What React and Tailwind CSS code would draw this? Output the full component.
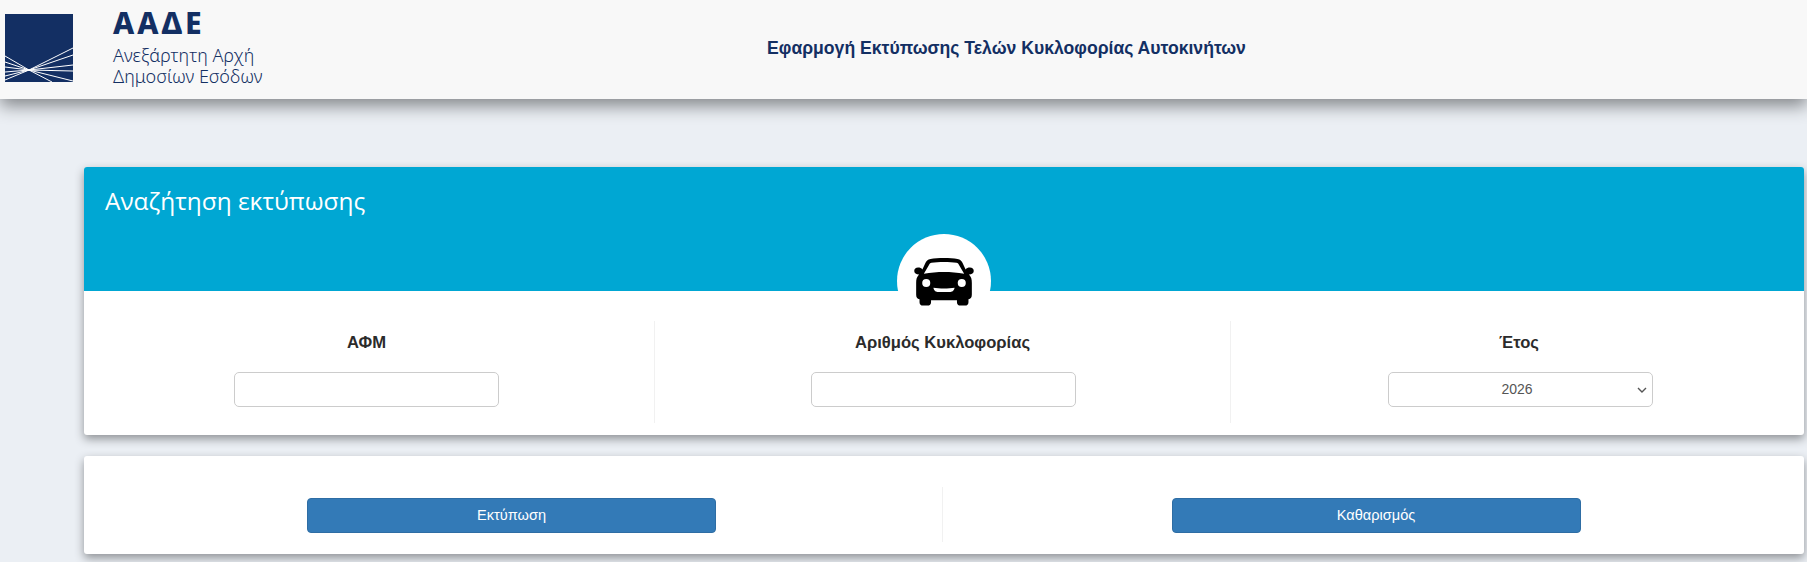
const years = [2026, 2025, 2024, 2023, 2022];

function Logo() {
    return (
        <svg width="68" height="68" viewBox="0 0 68 68" className="shrink-0 -mt-[3px]">
            <rect width="68" height="68" fill="#132f63" />
            <g stroke="#ffffff" fill="none">
                <path d="M0 42 L24 56 L68 34" strokeWidth="1" />
                <path d="M0 48 L24 56 L68 41" strokeWidth="1" />
                <path d="M0 53 L24 56 L68 51" strokeWidth="1.2" />
                <path d="M0 58 L24 56 L68 57" strokeWidth="1.2" />
                <path d="M0 62 L24 56 L68 67" strokeWidth="1" />
                <path d="M0 66 L24 56 L47 68" strokeWidth="1" />
            </g>
        </svg>
    );
}

function CarIcon() {
    return (
        <svg width="62" height="48" viewBox="0 0 62 50">
            <path
                fill="#000000"
                d="M17 1 C24 -0.3 38 -0.3 45 1 C48 1.6 49.5 3 50.5 5.5 L53.5 12 C54.5 10.5 56 10 58 10 C60.5 10 62 11.5 62 13.5 C62 16 60 17 57 17.2 C59.5 20 60 22 60 26 L60 38 C60 41 59 42.5 56.5 43 L56.5 46 C56.5 48.5 55 49.5 53 49.5 L48 49.5 C46 49.5 44.5 48.5 44.5 46 L44.5 44 L17.5 44 L17.5 46 C17.5 48.5 16 49.5 14 49.5 L9 49.5 C7 49.5 5.5 48.5 5.5 46 L5.5 43 C3 42.5 2 41 2 38 L2 26 C2 22 2.5 20 5 17.2 C2 17 0 16 0 13.5 C0 11.5 1.5 10 4 10 C6 10 7.5 10.5 8.5 12 L11.5 5.5 C12.5 3 14 1.6 17 1 Z"
            />
            <path fill="#ffffff" d="M18 5 C25 3.8 37 3.8 44 5 C45.5 5.3 46 6 46.5 7 L52 16.5 C38 14 24 14 10 16.5 L15.5 7 C16 6 16.5 5.3 18 5 Z" />
            <circle cx="12.5" cy="26" r="4.2" fill="#ffffff" />
            <circle cx="49.5" cy="26" r="4.2" fill="#ffffff" />
            <path fill="#ffffff" d="M20 31 C26 32 36 32 42 31 C41.5 34.5 39 35.5 37 35.5 L25 35.5 C23 35.5 20.5 34.5 20 31 Z" />
        </svg>
    );
}

function Field({ label, children, divider }) {
    return (
        <div className={`h-[102px] flex flex-col items-center ${divider ? "border-r border-[#f1f1f1]" : ""}`}>
            <label className="h-[20px] mt-[12px] text-[16.6px] leading-[20px] font-bold text-[#2b2b2b]">{label}</label>
            <div className="relative mt-[19px]">{children}</div>
        </div>
    );
}

export default function App() {
    const boxClass =
        "block w-[265px] h-[35px] bg-white border border-[#cccccc] rounded-[5px] text-[14px] text-[#555555] outline-none";

    return (
        <div className="h-[562px] overflow-hidden bg-[#ebeff4] font-['Liberation_Sans',Arial,sans-serif]">
            <header className="relative z-10 h-[99px] bg-[#f8f8f8] shadow-[0_7px_16px_#85888c] flex items-center">
                <div className="w-[283px] flex items-center pl-[5px] shrink-0">
                    <Logo />
                    <div className="ml-[40px] text-[#132f63] font-['Noto_Sans',sans-serif]">
                        <div className="text-[30px] leading-[32px] font-extrabold tracking-[3px] -mt-[6px]">ΑΑΔΕ</div>
                        <div className="mt-[6px] text-[18px] leading-[21px] font-light whitespace-nowrap">
                            Ανεξάρτητη Αρχή
                            <br />
                            Δημοσίων Εσόδων
                        </div>
                    </div>
                </div>
                <h1 className="w-[1447px] -mt-[3px] text-center text-[17.6px] font-bold text-[#132f63]">
                    Εφαρμογή Εκτύπωσης Τελών Κυκλοφορίας Αυτοκινήτων
                </h1>
            </header>

            <main className="pl-[84px] pr-[3px] pt-[68px]">
                <section className="bg-white rounded-[3px] shadow-[0_4px_10px_#8f9296]">
                    <div className="relative h-[124px] bg-[#00a7d3] rounded-t-[3px] px-[21px] pt-[18px]">
                        <h2 className="text-[24.4px] leading-[32px] text-white font-['Open_Sans',sans-serif]">
                            Αναζήτηση εκτύπωσης
                        </h2>
                        <div className="absolute left-[813px] top-[67px] w-[94px] h-[94px] rounded-full bg-white flex items-start justify-center pt-[24px]">
                            <CarIcon />
                        </div>
                    </div>
                    <div className="-ml-[5px] -mr-[3px] grid grid-cols-3 pt-[30px] h-[144px]">
                        <Field label="ΑΦΜ" divider>
                            <input className={`${boxClass} px-3`} />
                        </Field>
                        <Field label="Αριθμός Κυκλοφορίας" divider>
                            <input className={`${boxClass} px-3 translate-x-[1px]`} />
                        </Field>
                        <Field label="Έτος">
                            <select
                                className={`${boxClass} appearance-none text-center pl-3 pr-[18px] translate-x-[1px]`}
                                defaultValue={2026}
                            >
                                {years.map((y) => (
                                    <option key={y} value={y}>
                                        {y}
                                    </option>
                                ))}
                            </select>
                            <svg
                                width="10"
                                height="6"
                                viewBox="0 0 10 6"
                                className="absolute right-[5px] top-[15px] pointer-events-none"
                            >
                                <path d="M1 1 L5 5 L9 1" fill="none" stroke="#555555" strokeWidth="1.4" />
                            </svg>
                        </Field>
                    </div>
                </section>

                <section className="mt-[21px] h-[98px] bg-white rounded-[3px] shadow-[0_4px_10px_#8f9296]">
                    <div className="-ml-[5px] -mr-[3px] grid grid-cols-2 pt-[31px]">
                        <div className="h-[55px] border-r border-[#f1f1f1] flex justify-center pt-[11px]">
                            <button className="w-[409px] h-[35px] translate-x-[1px] bg-[#337ab7] border border-[#2e6da4] rounded-[4px] text-[14.6px] text-white">
                                Εκτύπωση
                            </button>
                        </div>
                        <div className="h-[55px] flex justify-center pt-[11px]">
                            <button className="w-[409px] h-[35px] translate-x-[1px] bg-[#337ab7] border border-[#2e6da4] rounded-[4px] text-[14.6px] text-white">
                                Καθαρισμός
                            </button>
                        </div>
                    </div>
                </section>
            </main>
        </div>
    );
}
